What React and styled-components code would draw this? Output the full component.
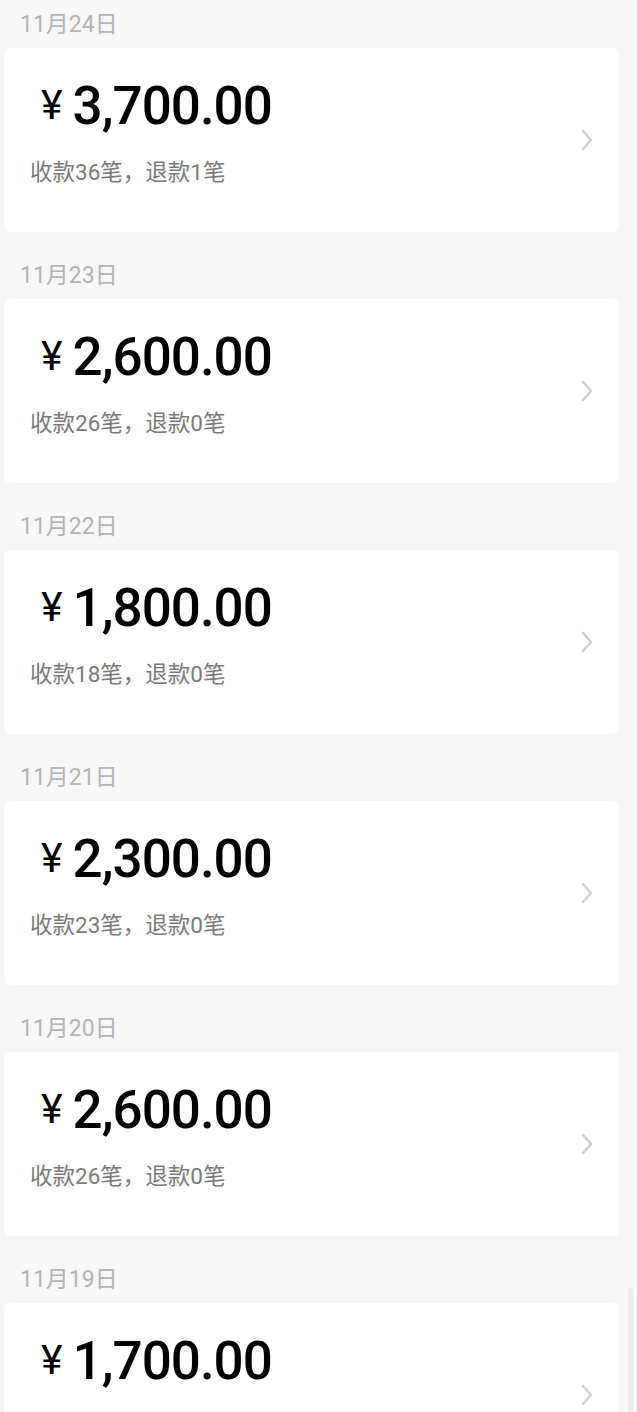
import React from 'react'
import styled, {createGlobalStyle} from 'styled-components'

const days = [
    {date: '11月24日', amount: '3,700.00', paid: 36, refund: 1},
    {date: '11月23日', amount: '2,600.00', paid: 26, refund: 0},
    {date: '11月22日', amount: '1,800.00', paid: 18, refund: 0},
    {date: '11月21日', amount: '2,300.00', paid: 23, refund: 0},
    {date: '11月20日', amount: '2,600.00', paid: 26, refund: 0},
    {date: '11月19日', amount: '1,700.00', paid: 17, refund: 0},
]

const GlobalStyle = createGlobalStyle`
    html, body {
        margin: 0;
        padding: 0;
        background: #f7f7f7;
        font-family: Roboto, "Noto Sans CJK SC", sans-serif;
        overflow: hidden;
    }
`

const Page = styled.div`
    display: flex;
    flex-direction: column;
    gap: 19px;
    padding: 0 18px 0 4px;
    height: 1412px;
    overflow: hidden;
`

const Section = styled.section`
    display: flex;
    flex-direction: column;
`

const DateLabel = styled.div`
    height: 44px;
    padding: 0 0 4px 16px;
    display: flex;
    align-items: center;
    font-size: 23px;
    color: #b4b4b4;
    font-family: Roboto, "Noto Sans CJK SC", sans-serif;
`

const Card = styled.div`
    height: 184px;
    box-sizing: border-box;
    background: #fff;
    border-radius: 6px;
    display: flex;
    padding: 0 26px;
`

const Info = styled.div`
    flex: 1;
    display: flex;
    flex-direction: column;
    padding-top: 32px;
`

const Amount = styled.div`
    display: flex;
    align-items: center;
    height: 53px;
    padding-left: 11px;
    color: #000;
    line-height: 1;
`

const Yen = styled.span`
    font-size: 41px;
    font-weight: 400;
    margin-right: 10px;
    margin-top: -3px;
`

const Number = styled.span`
    font-size: 53px;
    font-weight: 500;
    letter-spacing: -1px;
`

const Summary = styled.div`
    margin-top: 24px;
    font-size: 22.5px;
    line-height: 30px;
    color: #7a7a7a;
    font-family: Roboto, "Noto Sans CJK SC", sans-serif;
`

const Chevron = styled.svg`
    align-self: center;
    width: 14px;
    height: 22px;
    flex: none;
    margin-right: -1px;
`

const ScrollThumb = styled.div`
    position: fixed;
    right: 4px;
    top: 1287px;
    width: 5px;
    height: 140px;
    border-radius: 3px;
    background: #ececec;
`

const DayCard = ({date, amount, paid, refund}) => (
    <Section>
        <DateLabel>{date}</DateLabel>
        <Card>
            <Info>
                <Amount>
                    <Yen>¥</Yen>
                    <Number>{amount}</Number>
                </Amount>
                <Summary>收款{paid}笔，退款{refund}笔</Summary>
            </Info>
            <Chevron viewBox="0 0 14 22">
                <polyline points="3,2 11,11 3,20" fill="none" stroke="#cfcfcf" strokeWidth="2.6" strokeLinecap="round" strokeLinejoin="round" />
            </Chevron>
        </Card>
    </Section>
)

const App = () => {
    return (
        <>
            <GlobalStyle />
            <Page>
                {days.map(d => <DayCard key={d.date} {...d} />)}
            </Page>
            <ScrollThumb />
        </>
    )
}

export default App
